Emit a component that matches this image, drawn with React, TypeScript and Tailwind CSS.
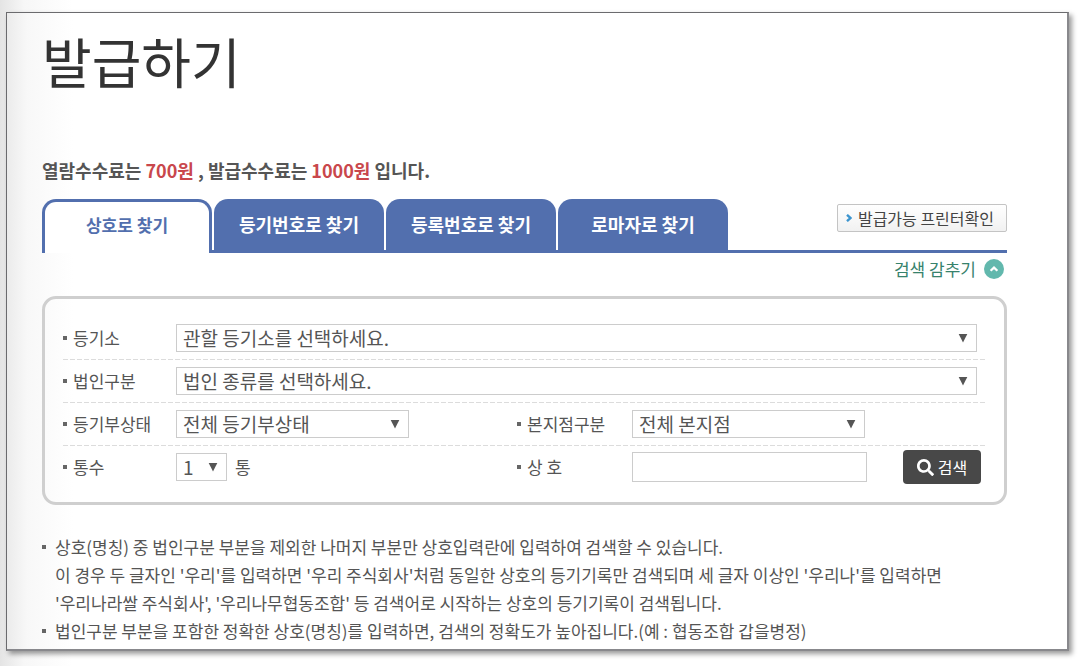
import React, { useState } from 'react';
import { FaSearch } from 'react-icons/fa';

const TABS = ['상호로 찾기', '등기번호로 찾기', '등록번호로 찾기', '로마자로 찾기'];

const Label: React.FC<{ htmlFor: string; children: React.ReactNode }> = ({ htmlFor, children }) => (
  <label htmlFor={htmlFor} className="flex items-center gap-[6px] text-[17px] leading-6 whitespace-nowrap">
    <span className="w-1 h-1 bg-[#666]" />
    {children}
  </label>
);

const Select: React.FC<{ id: string; options: string[]; className: string }> = ({ id, options, className }) => (
  <div className={`relative ${className}`}>
    <select
      id={id}
      className="block w-full h-7 appearance-none border border-[#ccc] bg-white pl-[6px] pr-6 text-[19px] leading-6 outline-none"
    >
      {options.map(option => (
        <option key={option}>{option}</option>
      ))}
    </select>
    <svg viewBox="0 0 10 9" className="absolute right-[9px] top-[10px] w-[10px] h-[9px] pointer-events-none" fill="#555">
      <path d="M0.7 0h8.6L5 8.6z" />
    </svg>
  </div>
);

const Divider = () => (
  <hr className="h-px border-0 bg-[repeating-linear-gradient(90deg,#dcdcdc_0_5px,transparent_5px_7px)]" />
);

const App: React.FC = () => {
  const [activeTab, setActiveTab] = useState(0);
  const [isOpen, setIsOpen] = useState(true);
  const [name, setName] = useState('');

  return (
    <div className="min-h-screen bg-[linear-gradient(90deg,#e4e4e4_0,#f7f7f7_24px,#fff_72px)] pt-3 pl-[6px] pr-[13px] pb-[15px] font-['Noto_Sans_CJK_KR',sans-serif] text-[#555]">
      <main className="border border-[#6b6b6e] border-r-2 border-b-2 border-r-[#88888c] border-b-[#88888c] bg-[linear-gradient(90deg,#ebebeb_0,#f8f8f8_20px,#fff_66px)] pl-[35px] pr-[60px] pb-1 shadow-[3px_3px_5px_#00000066]">
        <h1 className="pt-5 text-[54px] leading-[56px] font-normal text-[#333]">발급하기</h1>

        <p className="mt-[69px] text-[18px] leading-6 font-bold">
          열람수수료는 <span className="text-[#c9474c]">700원</span> , 발급수수료는{' '}
          <span className="text-[#c9474c]">1000원</span> 입니다.
        </p>

        {/* Tabs */}
        <div className="mt-[17px] flex h-[54px]">
          {TABS.map((tab, idx) => (
            <div key={tab} className={activeTab === idx ? '' : 'border-b-[3px] border-[#526fae] pl-[2px]'}>
              <button
                onClick={() => setActiveTab(idx)}
                className={`w-[170px] h-full rounded-t-[14px] font-bold whitespace-nowrap ${
                  activeTab === idx
                    ? 'border-[3px] border-b-0 border-[#526fae] bg-white pb-[6px] text-[17px] text-[#526fae]'
                    : 'bg-[#526fae] text-[18px] text-white'
                }`}
              >
                {tab}
              </button>
            </div>
          ))}
          <div className="flex-1 flex justify-end items-start pt-[5px] border-b-[3px] border-[#526fae]">
            <button className="flex items-center gap-[6px] h-7 px-2 pr-3 border border-[#c4c4c4] rounded-[2px] bg-linear-to-b from-white to-[#f1f1f1] text-[16px] leading-6 text-[#444] whitespace-nowrap">
              <svg viewBox="0 0 6 8" className="w-[6px] h-2" fill="none" stroke="#3d95cf" strokeWidth="2.4">
                <path d="M1 0.8 4.4 4 1 7.2" />
              </svg>
              발급가능 프린터확인
            </button>
          </div>
        </div>

        <div className="flex justify-end h-8 mb-[11px] pr-[3px]">
          <button onClick={() => setIsOpen(!isOpen)} className="flex items-center gap-2 text-[17px] text-[#37826c]">
            검색 감추기
            <svg viewBox="0 0 20 20" className="w-5 h-5">
              <circle cx="10" cy="10" r="10" fill="#62b8ad" />
              <path d="M6.6 11.8 10 8.6l3.4 3.2" fill="none" stroke="#fff" strokeWidth="2.2" />
            </svg>
          </button>
        </div>

        {/* Search form */}
        {isOpen && (
          <form
            onSubmit={e => e.preventDefault()}
            className="border-[3px] border-[#cfcfcf] rounded-[14px] pt-[18px] pr-[19px] pb-[14px] pl-[18px]"
          >
            <div className="grid grid-cols-[113px_1fr] items-center h-[42px] pr-2">
              <Label htmlFor="office">등기소</Label>
              <Select id="office" options={['관할 등기소를 선택하세요.']} className="w-full" />
            </div>
            <Divider />
            <div className="grid grid-cols-[113px_1fr] items-center h-[42px] pr-2">
              <Label htmlFor="corp">법인구분</Label>
              <Select id="corp" options={['법인 종류를 선택하세요.']} className="w-full" />
            </div>
            <Divider />
            <div className="grid grid-cols-[113px_341fr_115px_353fr] items-center h-[42px]">
              <Label htmlFor="status">등기부상태</Label>
              <Select id="status" options={['전체 등기부상태']} className="w-[233px]" />
              <Label htmlFor="branch">본지점구분</Label>
              <Select id="branch" options={['전체 본지점']} className="w-[233px]" />
            </div>
            <Divider />
            <div className="grid grid-cols-[113px_341fr_115px_353fr] items-center h-[42px]">
              <Label htmlFor="count">통수</Label>
              <div className="flex items-center gap-2 text-[17px]">
                <Select id="count" options={['1', '2', '3', '4', '5']} className="w-[51px]" />
                <span>통</span>
              </div>
              <Label htmlFor="name">상 호</Label>
              <div className="flex items-center justify-between pr-1">
                <input
                  id="name"
                  type="text"
                  value={name}
                  onChange={e => setName(e.target.value)}
                  className="w-[235px] h-[30px] border border-[#ccc] bg-white px-[6px] text-[19px] outline-none"
                />
                <button
                  type="submit"
                  className="flex items-center justify-center gap-1 w-[78px] h-[34px] rounded-[4px] bg-[#484848] text-[16px] text-white"
                >
                  <FaSearch size={17} />
                  검색
                </button>
              </div>
            </div>
          </form>
        )}

        <ul className="mt-7 text-[17px] leading-7">
          <li className="flex gap-[9px]">
            <span className="mt-3 w-1 h-1 shrink-0 bg-[#666]" />
            <p>
              상호(명칭) 중 법인구분 부분을 제외한 나머지 부분만 상호입력란에 입력하여 검색할 수 있습니다.
              <br />
              이 경우 두 글자인 '우리'를 입력하면 '우리 주식회사'처럼 동일한 상호의 등기기록만 검색되며 세 글자 이상인 '우리나'를 입력하면
              <br />
              '우리나라쌀 주식회사', '우리나무협동조합' 등 검색어로 시작하는 상호의 등기기록이 검색됩니다.
            </p>
          </li>
          <li className="flex gap-[9px]">
            <span className="mt-3 w-1 h-1 shrink-0 bg-[#666]" />
            <p>법인구분 부분을 포함한 정확한 상호(명칭)를 입력하면, 검색의 정확도가 높아집니다.(예 : 협동조합 갑을병정)</p>
          </li>
        </ul>
      </main>
    </div>
  );
};

export default App;
